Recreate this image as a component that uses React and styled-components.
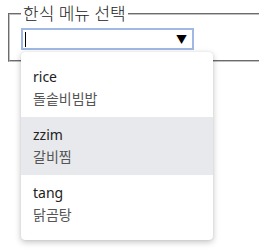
import styled, { createGlobalStyle } from 'styled-components'

const menus = [
	{ id: 'rice', name: '돌솥비빔밥' },
	{ id: 'zzim', name: '갈비찜' },
	{ id: 'tang', name: '닭곰탕' },
]

export default function App() {
	return (
		<>
			<GlobalStyle />
			<Page>
				<Fieldset>
					<Legend>한식 메뉴 선택</Legend>
					<ComboWrap>
						<Combo>
							<Caret />
							<Arrow>▼</Arrow>
						</Combo>
						<Menu>
							{menus.map((m) => (
								<Option key={m.id} $active={m.id === 'zzim'}>
									<OptionValue>{m.id}</OptionValue>
									<OptionLabel>{m.name}</OptionLabel>
								</Option>
							))}
						</Menu>
					</ComboWrap>
				</Fieldset>
			</Page>
		</>
	)
}

const GlobalStyle = createGlobalStyle`
	html {
		overflow: hidden;
	}
	body {
		margin: 0;
		min-height: 249px;
		background: #fff;
		font-family: 'Noto Sans', 'Noto Sans CJK KR', sans-serif;
		color: #222;
	}
`

const Page = styled.div`
	padding: 3px 0 0 8px;
`

const Fieldset = styled.fieldset`
	margin: 0;
	box-sizing: border-box;
	border: 2px groove #c0c0c0;
	border-right: none;
	padding: 3px 11px 10px;
`

const Legend = styled.legend`
	padding: 0 2px;
	font-size: 17px;
	font-weight: 300;
	line-height: 22px;
	color: #222;
`

const ComboWrap = styled.div`
	position: relative;
	width: 173px;
`

const Combo = styled.div`
	display: flex;
	align-items: center;
	justify-content: space-between;
	box-sizing: border-box;
	height: 22px;
	border: 2px solid #9fb9e4;
	background: #fff;
	padding: 0 5px 0 2px;
`

const Caret = styled.span`
	width: 1px;
	height: 15px;
	background: #000;
`

const Arrow = styled.span`
	font-size: 11px;
	line-height: 1;
	color: #000;
`

const Menu = styled.ul`
	position: absolute;
	top: 24px;
	left: 0;
	width: 192px;
	margin: 0;
	padding: 7px 0;
	list-style: none;
	background: #fff;
	border-radius: 4px;
	box-shadow: 0 2px 6px rgba(0, 0, 0, 0.25), 0 0 1px rgba(0, 0, 0, 0.15);
`

const Option = styled.li`
	padding: 7px 12px;
	background: ${(p) => (p.$active ? '#e8e9ec' : 'transparent')};
`

const OptionValue = styled.div`
	font-size: 14px;
	line-height: 22px;
	color: #222;
`

const OptionLabel = styled.div`
	font-size: 14px;
	line-height: 22px;
	color: #555;
`
